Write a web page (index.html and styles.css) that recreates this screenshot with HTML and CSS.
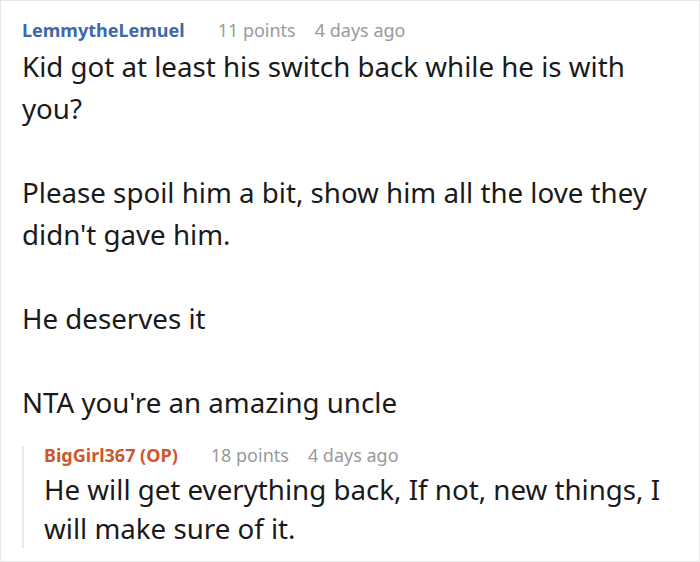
FILE: index.html
```html
<!DOCTYPE html>
<html>
<head>
<meta charset="utf-8">
<link rel="stylesheet" href="styles.css">
</head>
<body>
<div class="card">
  <div class="comment">
    <div class="meta">
      <span class="author">LemmytheLemuel</span>
      <span class="points">11 points</span>
      <span class="time">4 days ago</span>
    </div>
    <div class="body">
      <p>Kid got at least his switch back while he is with you?</p>
      <p>Please spoil him a bit, show him all the love they didn't gave him.</p>
      <p>He deserves it</p>
      <p>NTA you're an amazing uncle</p>
    </div>
    <div class="reply">
      <div class="meta meta-reply">
        <span class="author op">BigGirl367 (OP)</span>
        <span class="points">18 points</span>
        <span class="time">4 days ago</span>
      </div>
      <div class="body body-reply">
        <p>He will get everything back, If not, new things, I will make sure of it.</p>
      </div>
    </div>
  </div>
</div>
</body>
</html>
```
FILE: styles.css
```css
html, body {
  margin: 0;
  padding: 0;
  background: #ffffff;
}
body {
  font-family: "Noto Sans", "Open Sans", sans-serif;
  color: #1a1a1a;
}
.card {
  box-sizing: border-box;
  width: 700px;
  height: 562px;
  border: 1px solid #e6e6e6;
  overflow: hidden;
  padding: 17px 20px 0 21px;
}
.meta {
  display: flex;
  align-items: baseline;
  font-size: 18px;
  line-height: 24px;
  white-space: nowrap;
}
.author {
  font-weight: 700;
  color: #4068a8;
}
.author.op {
  color: #cc582c;
}
.points {
  color: #9a9a9a;
  margin-left: 33px;
}
.time {
  color: #9a9a9a;
  margin-left: 19px;
}
.body {
  margin-top: 3px;
  font-size: 27.7px;
  line-height: 42px;
}
.body p {
  margin: 0 0 42px 0;
}
.body p:last-child {
  margin-bottom: 0;
}
.reply {
  margin-top: 23px;
  border-left: 2px solid #e8e8e8;
  padding-left: 20px;
}
.meta-reply {
  line-height: 18px;
}
.body-reply {
  margin-top: 6px;
  line-height: 39px;
}
```
